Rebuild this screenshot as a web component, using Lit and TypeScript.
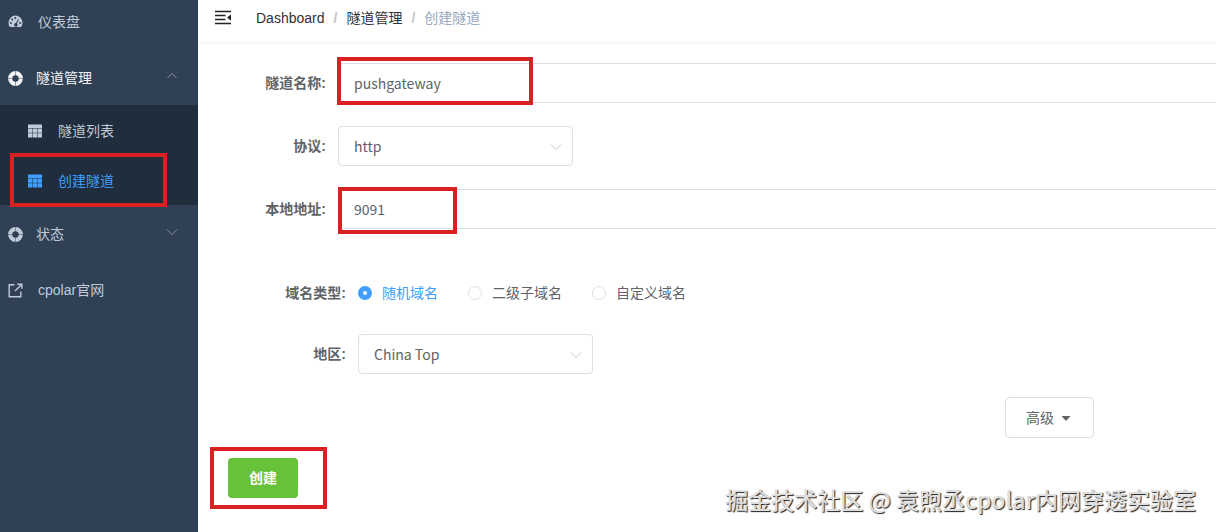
import { LitElement, html, css, svg } from "lit";
import { customElement } from "lit/decorators.js";

const gauge = svg`<path fill="currentColor" fill-rule="evenodd" d="M7.500 1.500A7.200 7.200 0 0 0 .5 8.700c0 1.600.5 3 1.300 4.100.2.2.4.3.7.3h10c.3 0 .5-.1.7-.3.8-1.100 1.300-2.500 1.300-4.100A7.200 7.200 0 0 0 7.500 1.500ZM2.800 8a1 1 0 1 1 0 2 1 1 0 0 1 0-2Zm1.400-3.400a1 1 0 1 1 0 2 1 1 0 0 1 0-2ZM7.300 3a1 1 0 1 1 0 2 1 1 0 0 1 0-2Zm2.800 2 .8.400-1.900 4.100a1.800 1.800 0 1 1-1-.4L10.100 5Zm2.100 3a1 1 0 1 1 0 2 1 1 0 0 1 0-2Z"/>`;
const ring = svg`<circle cx="7.500" cy="7.500" r="5.300" fill="none" stroke="currentColor" stroke-width="4.200"/><path d="M7.500 0v5M7.500 10v5M0 7.500h5M10 7.500h5" stroke="#304156" stroke-width=".7" opacity=".7"/>`;
const grid = svg`<path fill="currentColor" d="M0 .500h15v3.900H0zM0 4.900h4.700v4.500H0zM5.200 4.900h4.600v4.500H5.200zM10.300 4.900H15v4.500h-4.700zM0 9.900h4.700v4.600H0zM5.200 9.900h4.600v4.600H5.200zM10.300 9.900H15v4.600h-4.700z"/>`;
const external = svg`<path fill="none" stroke="currentColor" stroke-width="1.400" d="M6.500 1.700H1.200v12h11.600V8.500M9.300 1.200h4.500v4.500M13.600 1.400 7 8"/>`;
const icon = (shape: unknown) =>
  html`<svg class="icon" width="15" height="15" viewBox="0 0 15 15" aria-hidden="true">${shape}</svg>`;
const chevron = (up = false) =>
  html`<svg class="chevron" width="12" height="12" viewBox="0 0 12 12" aria-hidden="true">
    <path fill="none" stroke="currentColor" d=${up ? "M1.500 8 6 3.500 10.500 8" : "M1 3.500 6 8.500 11 3.500"} />
  </svg>`;

@customElement("side-menu")
class SideMenu extends LitElement {
  static styles = css`
    :host { display: block; background: #304156; color: #bfcbd9; font-size: 14px; }
    a, .toggle {
      display: flex; align-items: center; gap: 13px; width: 100%; height: 56px; box-sizing: border-box;
      padding: 2px 20px 0 8px; border: 0; background: none; color: inherit; font: inherit;
      text-align: left; text-decoration: none;
    }
    .toggle span { flex: 1; }
    .wide { gap: 15px; }
    .first { height: 49px; padding-top: 0; padding-bottom: 6px; }
    .opened { color: #f4f4f5; }
    .chevron { color: #909399; margin-bottom: 4px; }
    .sub { background: #1f2d3d; }
    .sub a { height: 50px; gap: 15px; padding-left: 28px; }
    .sub .icon { width: 14px; height: 14px; margin-right: 1px; }
    .sub .active { color: #409eff; }
    .marked { position: relative; }
    .mark {
      position: absolute; z-index: 1; left: 10px; top: -2px; width: 157px; height: 54px;
      box-sizing: border-box; border: 4px solid #dc1f21; pointer-events: none;
    }
  `;
  render() {
    return html`<nav>
      <a class="wide first" href="#dashboard">${icon(gauge)}<span>仪表盘</span></a>
      <button class="toggle opened" aria-expanded="true">${icon(ring)}<span>隧道管理</span>${chevron(true)}</button>
      <div class="sub">
        <a href="#list">${icon(grid)}<span>隧道列表</span></a>
        <div class="marked">
          <a class="active" href="#create">${icon(grid)}<span>创建隧道</span></a>
          <div class="mark"></div>
        </div>
      </div>
      <button class="toggle" aria-expanded="false">${icon(ring)}<span>状态</span>${chevron()}</button>
      <a class="wide" href="#site">${icon(external)}<span>cpolar官网</span></a>
    </nav>`;
  }
}

@customElement("top-bar")
class TopBar extends LitElement {
  static styles = css`
    :host { display: block; border-bottom: 1px solid #f4f5f6; box-shadow: 0 1px 3px rgba(0, 21, 41, 0.03); }
    header { display: flex; align-items: center; height: 36px; padding: 0 17px 6px; gap: 25px; font-size: 14px; }
    .fold { display: flex; padding: 0; border: 0; background: none; color: #222; }
    ol { display: flex; margin: 0; padding: 0; list-style: none; }
    li + li::before { content: "/"; margin: 0 9px; color: #c0c4cc; font-weight: 700; }
    a { color: #303133; text-decoration: none; }
    .current { color: #97a8be; }
  `;
  render() {
    return html`<header>
      <button class="fold" aria-label="Toggle sidebar">
        <svg width="16" height="16" viewBox="0 0 16 16" aria-hidden="true">
          <path d="M0 1.500h16M0 5.500h10.500M0 9.500h10.500M0 13.500h16" stroke="currentColor" stroke-width="1.500" />
          <path d="M16 4.500v6.200L12 7.600z" fill="currentColor" />
        </svg>
      </button>
      <ol>
        <li><a href="#dashboard">Dashboard</a></li>
        <li><a href="#tunnels">隧道管理</a></li>
        <li class="current">创建隧道</li>
      </ol>
    </header>`;
  }
}

@customElement("tunnel-form")
class TunnelForm extends LitElement {
  static styles = css`
    :host { display: block; padding-top: 20px; font-size: 14px; color: #606266; }
    form { display: flex; flex-direction: column; gap: 23px; }
    .row { display: grid; grid-template-columns: 128px 1fr; column-gap: 12px; align-items: center; min-height: 40px; }
    .nested { display: flex; flex-direction: column; gap: 21px; margin-top: 21px; padding-left: 20px; }
    .name { text-align: right; font-weight: 700; }
    .field { position: relative; }
    .text, select {
      display: block; width: 100%; height: 40px; box-sizing: border-box; margin: 0; padding: 0 15px;
      border: 1px solid #dcdfe6; border-radius: 4px; background: #fff; color: #606266;
      font-family: "Noto Sans CJK SC", sans-serif; font-size: 14px; outline: 0;
    }
    .text { border-right: 0; border-radius: 4px 0 0 4px; }
    select { appearance: none; }
    .short { width: 235px; }
    .short .chevron { position: absolute; right: 11px; top: 15px; color: #c0c4cc; pointer-events: none; }
    .radios { display: flex; gap: 30px; }
    .radio { display: flex; align-items: center; gap: 10px; }
    .radio input {
      appearance: none; width: 14px; height: 14px; margin: 0; border: 1px solid #dcdfe6;
      border-radius: 50%; background: #fff;
    }
    .radio input:checked { border: 5px solid #409eff; }
    .radio input:checked + span { color: #409eff; }
    .more { display: flex; justify-content: flex-end; padding-right: 122px; }
    button { height: 40px; border-radius: 4px; font: inherit; padding: 0 20px; }
    .advanced {
      display: flex; align-items: center; gap: 5px; height: 41px;
      border: 1px solid #dcdfe6; background: #fff; color: #606266;
    }
    .submit { position: relative; align-self: flex-start; margin: -3px 0 0 30px; }
    .create { display: block; width: 70px; border: 0; background: #67c23a; color: #fff; font-weight: 700; }
    .mark { position: absolute; box-sizing: border-box; border: 4px solid #dc1f21; pointer-events: none; }
    .mark-name { left: -1px; top: -6px; width: 196px; height: 48px; }
    .mark-port { left: 0; top: -2px; width: 119px; height: 47px; }
    .mark-create { left: -18px; top: -11px; width: 117px; height: 62px; }
  `;
  render() {
    return html`<form>
      <div class="row">
        <label class="name" for="name">隧道名称:</label>
        <div class="field"><input class="text" id="name" value="pushgateway" /><div class="mark mark-name"></div></div>
      </div>
      <div class="row">
        <label class="name" for="proto">协议:</label>
        <div class="field short"><select id="proto"><option>http</option></select>${chevron()}</div>
      </div>
      <div class="row">
        <label class="name" for="addr">本地地址:</label>
        <div class="field"><input class="text" id="addr" value="9091" /><div class="mark mark-port"></div></div>
      </div>
      <div class="nested">
        <div class="row" role="radiogroup" aria-labelledby="kind">
          <span class="name" id="kind">域名类型:</span>
          <div class="radios">
            ${["随机域名", "二级子域名", "自定义域名"].map(
              (t, i) => html`<label class="radio"><input type="radio" name="domain" ?checked=${i === 0} /><span>${t}</span></label>`
            )}
          </div>
        </div>
        <div class="row">
          <label class="name" for="area">地区:</label>
          <div class="field short"><select id="area"><option>China Top</option></select>${chevron()}</div>
        </div>
      </div>
      <div class="more">
        <button class="advanced" type="button">
          <span>高级</span>
          <svg width="14" height="14" viewBox="0 0 14 14" aria-hidden="true"><path d="M2.500 5h9L7 10z" fill="currentColor" /></svg>
        </button>
      </div>
      <div class="submit">
        <button class="create" type="button">创建</button>
        <div class="mark mark-create"></div>
      </div>
    </form>`;
  }
}

@customElement("app-root")
class AppRoot extends LitElement {
  static styles = css`
    :host {
      display: grid; grid-template-columns: 198px 1fr; min-height: 100vh; position: relative; background: #fff;
      font-family: "Liberation Sans", "Noto Sans CJK SC", sans-serif; line-height: 20px;
    }
    .credit {
      position: absolute; right: 20px; bottom: 16px; font: 500 23px/34px "Noto Sans CJK SC", sans-serif;
      color: #dedede; text-shadow: 1px 1px 1px #222; white-space: nowrap;
    }
  `;
  render() {
    return html`<side-menu></side-menu>
      <main><top-bar></top-bar><tunnel-form></tunnel-form></main>
      <div class="credit">掘金技术社区 @ 袁煦丞cpolar内网穿透实验室</div>`;
  }
}
